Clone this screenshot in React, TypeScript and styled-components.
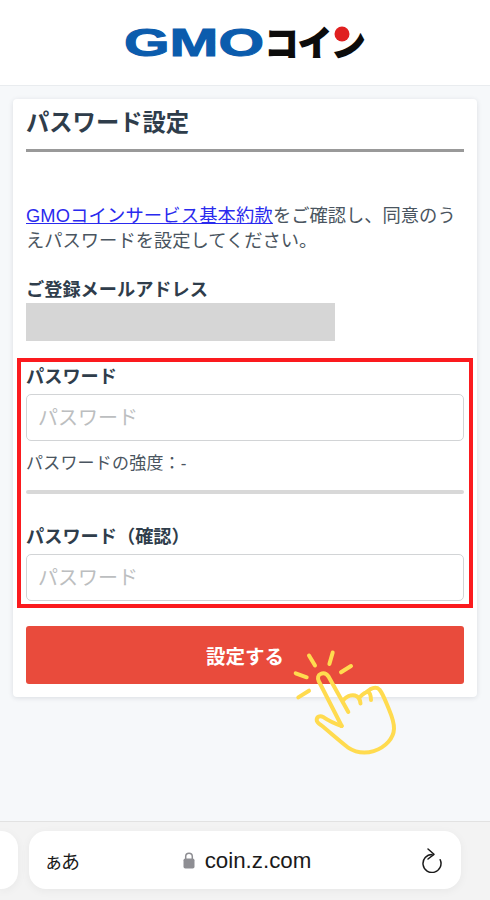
import styled, { createGlobalStyle } from 'styled-components';

const GlobalStyle = createGlobalStyle`
    html, body { margin: 0; padding: 0; background: #f6f8fa; }
    * { box-sizing: border-box; }
    body { font-family: "Liberation Sans", "Noto Sans CJK JP", sans-serif; }
`;

const Page = styled.div`
    position: relative;
    width: 490px;
    height: 900px;
    display: flex;
    flex-direction: column;
    overflow: hidden;
`;

const Header = styled.header`
    height: 86px;
    flex: none;
    background: #fff;
    border-bottom: 1px solid #e9ecef;
    display: flex;
    align-items: flex-start;
    justify-content: center;
`;

const Main = styled.main`
    flex: 1;
    padding: 13px 13px 0;
    background: #f6f8fa;
`;

const Card = styled.section`
    position: relative;
    height: 598px;
    padding: 0 13px;
    background: #fff;
    border-radius: 4px;
    box-shadow: 0 1px 5px rgba(40, 50, 70, 0.13);
`;

const Title = styled.h1`
    margin: 0;
    height: 53px;
    padding-top: 8px;
    border-bottom: 3px solid #999;
    font-size: 23.3px;
    line-height: 32px;
    font-weight: 700;
    color: #2f3d4b;
`;

const Intro = styled.p`
    margin: 51px 0 0;
    font-size: 18.3px;
    line-height: 25px;
    color: #4a5560;
`;

const TermsLink = styled.a`
    color: #2a2aee;
    letter-spacing: 0.15px;
    text-decoration: underline;
`;

const Label = styled.div<{ $top?: number }>`
    margin-top: ${(p) => p.$top ?? 0}px;
    font-size: 18.2px;
    line-height: 24px;
    font-weight: 700;
    color: #2f3d4b;
`;

const MaskedMail = styled.div`
    width: 309px;
    height: 38px;
    margin-top: 1px;
    background: #d6d6d6;
`;

const RedFrame = styled.div`
    margin: 17px -9px 0;
    height: 250px;
    padding: 3px 5px 0;
    border: 4px solid #fb1a1e;
`;

const Field = styled.input`
    display: block;
    width: 100%;
    height: 47px;
    margin-top: 5px;
    padding: 1px 11px 0;
    border: 1.5px solid #d2d4d6;
    border-radius: 5px;
    background: #fff;
    font-family: inherit;
    font-size: 20px;
    outline: none;

    &::placeholder {
        color: #bcbec0;
        opacity: 1;
    }
`;

const Strength = styled.div`
    margin-top: 11px;
    font-size: 17px;
    line-height: 24px;
    letter-spacing: 0.2px;
    color: #4a5560;
`;

const StrengthBar = styled.div`
    height: 4px;
    margin-top: 14px;
    border-radius: 2px;
    background: #d8d8d8;
`;

const Submit = styled.button`
    display: block;
    width: 100%;
    height: 58px;
    margin-top: 18px;
    border: 0;
    border-radius: 3px;
    background: #e94b3c;
    color: #fff;
    font-family: inherit;
    font-size: 19.5px;
    font-weight: 700;
`;

const Hand = styled.svg`
    position: absolute;
    left: 280px;
    top: 640px;
    width: 130px;
    height: 125px;
    fill: none;
    stroke: #ffdb4f;
    stroke-width: 4;
    stroke-linecap: round;
    stroke-linejoin: round;
`;

const BrowserBar = styled.footer`
    height: 79px;
    flex: none;
    display: flex;
    gap: 11px;
    margin-top: 0;
    padding: 9px 29px 0 0;
    background: #f3f3f3;
    border-top: 1px solid #e2e2e2;
`;

const Pill = styled.div`
    height: 58px;
    background: #fff;
    border-radius: 17px;
    box-shadow: 0 2px 10px rgba(0, 0, 0, 0.05);
`;

const SideTab = styled(Pill)`
    width: 18px;
    border-radius: 0 17px 17px 0;
`;

const UrlPill = styled(Pill)`
    flex: 1;
    display: flex;
    align-items: center;
    justify-content: space-between;
    padding: 0 18px 0 15px;
`;

const TextSize = styled.span`
    width: 40px;
    font-family: "Noto Sans CJK JP", sans-serif;
    font-size: 19px;
    letter-spacing: -2px;
    color: #1a1a1a;
`;

const Address = styled.div`
    display: flex;
    align-items: center;
    gap: 10px;
    margin-right: 11px;
    padding-top: 1px;
    font-size: 22.3px;
    color: #1a1a1a;
`;

const Logo = () => (
    <svg width="260" height="60" viewBox="0 0 260 60" style={{ marginTop: 14 }}>
        <text x="9" y="42" fontFamily="Liberation Sans" fontWeight="700" fontSize="39" fill="#0b5cad" stroke="#0b5cad" strokeWidth="1" textLength="140" lengthAdjust="spacingAndGlyphs">
            GMO
        </text>
        <text x="150" y="42" fontFamily="Noto Sans CJK JP" fontWeight="700" fontSize="34" fill="#0c0c0c" stroke="#0c0c0c" strokeWidth="2" textLength="100" lengthAdjust="spacingAndGlyphs">
            コイン
        </text>
        <circle cx="227" cy="20" r="9" fill="#fff" />
        <circle cx="227" cy="20" r="7.500" fill="#e02020" />
    </svg>
);

const Pointer = () => (
    <Hand viewBox="0 0 130 125">
        <path d="M29 15.5l6 10M52.700 12.500l-3.300 11.500M71 26l-10 6.300M15.700 33.300l11 4M29 50.700l-10.700 6.700" />
        <path d="M61.700 86c-7-2.500-14-6-18-8.700-4-2-7-.7-7 2.700 0 2.300 2 3.700 4.500 5.300 7.500 6 17 14.500 26.500 22 8 5.300 17 6.500 26 3.800 12-3.800 20-13 20.300-22.500.2-8-3-14-7-24-3-7.500-5-12-7.500-15-2.500-2.500-6-2-9-.5l-3.500 2.500" />
        <path d="M61.700 86L38.700 41c-1.500-3-.5-6 1.800-7 3-1.500 6-.3 8 2.500L68.300 72" />
        <path d="M63 60.500c3-3.800 8-6 12-5 3 .8 5 3.500 5.500 8" />
        <path d="M80 57c2.500-3 6.500-5.500 8-5 1.800.5 2.800 3 3 8" />
    </Hand>
);

const Lock = () => (
    <svg width="12" height="17" viewBox="0 0 12 17">
        <path d="M2.700 7V4.500a3.300 3.300 0 0 1 6.600 0V7" fill="none" stroke="#8e8e93" strokeWidth="1.500" />
        <rect x="0.500" y="6.500" width="11" height="10" rx="1.800" fill="#8e8e93" />
    </svg>
);

const Reload = () => (
    <svg width="22" height="26" viewBox="0 0 22 26" fill="none" stroke="#1a1a1a" strokeWidth="1.500" strokeLinecap="round" strokeLinejoin="round">
        <path d="M11 7.500a9 9 0 1 0 8.200 5.300" />
        <path d="M7 2l6 5.300-6 4.700" />
    </svg>
);

export default function App() {
    return (
        <>
            <GlobalStyle />
            <Page>
                <Header>
                    <Logo />
                </Header>
                <Main>
                    <Card>
                        <Title>パスワード設定</Title>
                        <Intro>
                            <TermsLink href="#">GMOコインサービス基本約款</TermsLink>をご確認し、同意のうえパスワードを設定してください。
                        </Intro>
                        <Label $top={25}>ご登録メールアドレス</Label>
                        <MaskedMail />
                        <RedFrame>
                            <Label>パスワード</Label>
                            <Field placeholder="パスワード" type="password" readOnly />
                            <Strength>パスワードの強度：-</Strength>
                            <StrengthBar />
                            <Label $top={31}>パスワード（確認）</Label>
                            <Field placeholder="パスワード" type="password" readOnly />
                        </RedFrame>
                        <Submit>設定する</Submit>
                    </Card>
                </Main>
                <BrowserBar>
                    <SideTab />
                    <UrlPill>
                        <TextSize>ぁあ</TextSize>
                        <Address>
                            <Lock />
                            coin.z.com
                        </Address>
                        <Reload />
                    </UrlPill>
                </BrowserBar>
                <Pointer />
            </Page>
        </>
    );
}
